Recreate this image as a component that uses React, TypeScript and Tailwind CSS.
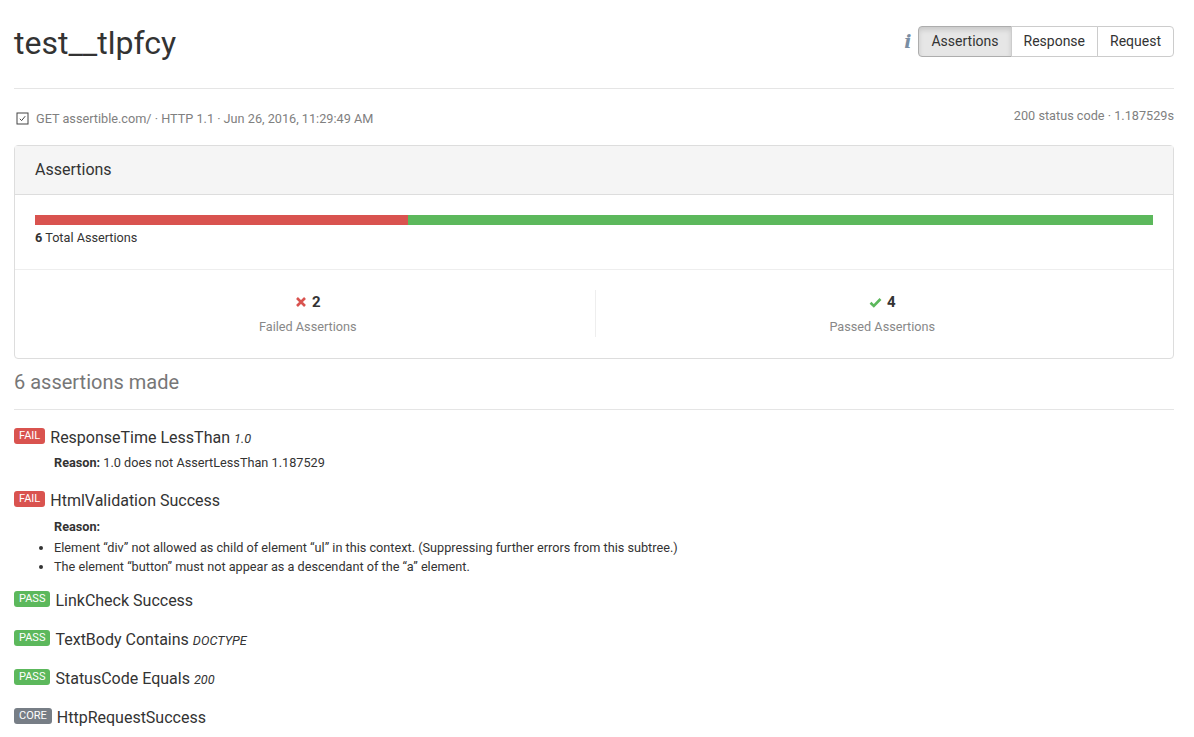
import React from "react";

type Status = "FAIL" | "PASS" | "CORE";

const badgeColors: Record<Status, string> = {
  FAIL: "bg-[#d9534f]",
  PASS: "bg-[#5cb85c]",
  CORE: "bg-[#777e86]",
};

function Badge({ status }: { status: Status }) {
  return (
    <span
      className={`${badgeColors[status]} flex h-[16px] items-center rounded-[3px] px-[5px] text-[11px] leading-none text-white`}
    >
      {status}
    </span>
  );
}

function AssertionTitle({
  status,
  name,
  arg,
}: {
  status: Status;
  name: string;
  arg?: string;
}) {
  return (
    <div className="flex h-[22px] items-center gap-[5px]">
      <span className="mb-[5px]">
        <Badge status={status} />
      </span>
      <span className="text-[16px] leading-[22px] text-[#333]">
        {name}
        {arg && <em className="ml-[4px] text-[12.7px]">{arg}</em>}
      </span>
    </div>
  );
}

function CheckboxIcon() {
  return (
    <svg width="13" height="13" viewBox="0 0 13 13" className="shrink-0">
      <rect x="1" y="1" width="11" height="11" fill="none" stroke="#444" strokeWidth="1" />
      <path d="M3.8 6.8 L5.6 8.6 L9.2 4.2" fill="none" stroke="#444" strokeWidth="1" />
    </svg>
  );
}

export default function App() {
  return (
    <div
      className="min-h-screen bg-white pl-[14px] pr-[20px] text-[#333]"
      style={{ fontFamily: "Roboto, 'Liberation Sans', sans-serif" }}
    >
      {/* Page header */}
      <div className="flex items-center justify-between border-b border-[#e5e5e5] pt-[24px] pb-[26px]">
        <h1 className="text-[32px] leading-[38px] font-normal text-[#333]">test__tlpfcy</h1>
        <div className="mb-[4px] flex items-center gap-[7px]">
          <span
            className="text-[19px] italic font-semibold text-[#7a8ea3]"
            style={{ fontFamily: "'DejaVu Serif', 'Liberation Serif', serif" }}
          >
            i
          </span>
          <div className="flex text-[14px]">
            <button className="h-[31px] rounded-l-[4px] border border-[#adadad] bg-[#e6e6e6] px-[12px] text-[#333] shadow-[inset_0_3px_5px_rgba(0,0,0,0.125)]">
              Assertions
            </button>
            <button className="-ml-px h-[31px] border border-[#ccc] bg-white px-[12px] text-[#333]">
              Response
            </button>
            <button className="-ml-px h-[31px] rounded-r-[4px] border border-[#ccc] bg-white px-[12px] text-[#333]">
              Request
            </button>
          </div>
        </div>
      </div>

      {/* Request meta */}
      <div className="mt-[21px] flex items-center justify-between text-[12.7px] leading-[17px] text-[#808080]">
        <div className="flex items-center gap-[7px] pl-[2px]">
          <CheckboxIcon />
          <span>GET assertible.com/ · HTTP 1.1 · Jun 26, 2016, 11:29:49 AM</span>
        </div>
        <span className="-mt-[7px]">200 status code · 1.187529s</span>
      </div>

      {/* Summary panel */}
      <div className="mt-[18px] rounded-[4px] border border-[#ddd]">
        <div className="border-b border-[#ddd] bg-[#f5f5f5] px-[20px] py-[14px] text-[16px] leading-[20px] text-[#333]">
          Assertions
        </div>
        <div className="px-[20px] pt-[20px] pb-[23px]">
          <div className="flex h-[10px]">
            <div className="bg-[#d9534f]" style={{ width: `${(2 / 6) * 100}%` }} />
            <div className="flex-1 bg-[#5cb85c]" />
          </div>
          <div className="mt-[4px] text-[12.7px] leading-[17px] text-[#333]">
            <b>6</b> Total Assertions
          </div>
        </div>
        <div className="flex border-t border-[#eee] pt-[20px] pb-[21px]">
          <div className="flex h-[47px] flex-1 flex-col items-center justify-center border-r border-[#eee] pl-[6px]">
            <div className="flex items-center gap-[5px] text-[15px] leading-[20px] font-bold text-[#333]">
              <svg width="12" height="12" viewBox="0 0 12 12">
                <path d="M2 2 L10 10 M10 2 L2 10" stroke="#d9534f" strokeWidth="2.6" strokeLinecap="butt" />
              </svg>
              2
            </div>
            <div className="mt-[6px] text-[12.7px] leading-[17px] text-[#888]">Failed Assertions</div>
          </div>
          <div className="flex h-[47px] flex-1 flex-col items-center justify-center pr-[4px]">
            <div className="flex items-center gap-[5px] text-[15px] leading-[20px] font-bold text-[#333]">
              <svg width="13" height="11" viewBox="0 0 13 11">
                <path d="M1.5 5.8 L4.8 9 L11.5 2" fill="none" stroke="#5cb85c" strokeWidth="2.6" />
              </svg>
              4
            </div>
            <div className="mt-[6px] text-[12.7px] leading-[17px] text-[#888]">Passed Assertions</div>
          </div>
        </div>
      </div>

      {/* Assertions list */}
      <div className="mt-[12px] border-b border-[#e5e5e5] pb-[16px] text-[20px] leading-[22px] text-[#777]">
        6 assertions made
      </div>

      <div className="mt-[17px]">
        <AssertionTitle status="FAIL" name="ResponseTime LessThan" arg="1.0" />
        <div className="mt-[5px] pl-[40px] text-[12.7px] leading-[17px] text-[#333]">
          <b>Reason:</b> 1.0 does not AssertLessThan 1.187529
        </div>
      </div>

      <div className="mt-[19px]">
        <AssertionTitle status="FAIL" name="HtmlValidation Success" />
        <div className="mt-[6px] pl-[40px] text-[12.7px] leading-[17px] text-[#333]">
          <b>Reason:</b>
        </div>
        <ul className="mt-[3px] list-disc pl-[40px] text-[12.7px] leading-[19px] text-[#333]">
          <li>
            Element “div” not allowed as child of element “ul” in this context. (Suppressing
            further errors from this subtree.)
          </li>
          <li>The element “button” must not appear as a descendant of the “a” element.</li>
        </ul>
      </div>

      <div className="mt-[14px]">
        <AssertionTitle status="PASS" name="LinkCheck Success" />
      </div>
      <div className="mt-[17px]">
        <AssertionTitle status="PASS" name="TextBody Contains" arg="DOCTYPE" />
      </div>
      <div className="mt-[17px]">
        <AssertionTitle status="PASS" name="StatusCode Equals" arg="200" />
      </div>
      <div className="mt-[17px] pb-[10px]">
        <AssertionTitle status="CORE" name="HttpRequestSuccess" />
      </div>
    </div>
  );
}
